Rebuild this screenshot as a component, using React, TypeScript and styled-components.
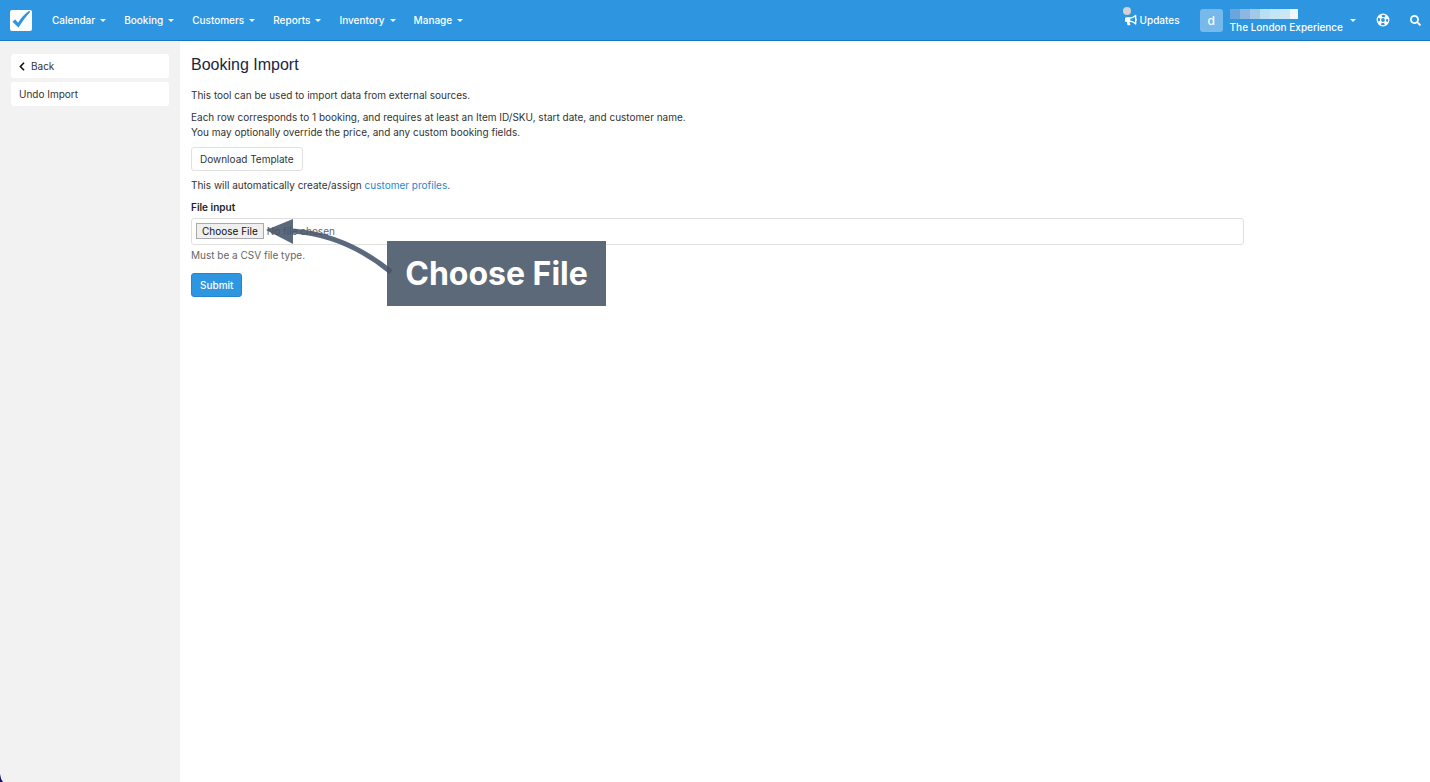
import React from "react";
import styled, { createGlobalStyle } from "styled-components";
import { FaBullhorn, FaSearch } from "react-icons/fa";

const GlobalStyle = createGlobalStyle`
  *, *::before, *::after { box-sizing: border-box; }
  body {
    margin: 0;
    background: #fff;
    color: #333;
    font-family: Inter, "Liberation Sans", Arial, sans-serif;
    font-size: 10px;
    line-height: 15px;
  }
  button, input { font-family: inherit; font-size: inherit; line-height: inherit; }
`;

const Page = styled.div`
  display: flex;
  flex-direction: column;
  min-height: 100vh;
`;

const TopBar = styled.header`
  display: flex;
  align-items: center;
  height: 41px;
  padding: 0 9px;
  background: #2e95e0;
  border-bottom: 1px solid #1578c8;
  color: #fff;
`;

const Logo = styled.a`
  display: flex;
  margin-right: 20px;
`;

const Nav = styled.nav`
  display: flex;
  gap: 18px;
`;

const BarButton = styled.button<{ $gap?: number }>`
  position: relative;
  display: flex;
  align-items: center;
  gap: ${(p) => p.$gap ?? 5}px;
  padding: 0;
  border: 0;
  background: none;
  color: #fff;
  font-weight: 500;
  cursor: pointer;
`;

const Caret = styled.span`
  border: 3px solid transparent;
  border-top-color: #fff;
  border-bottom: 0;
`;

const Tools = styled.div`
  display: flex;
  align-items: center;
  margin-left: auto;
  gap: 20px;
`;

const Dot = styled.span`
  position: absolute;
  top: -6px;
  left: -2px;
  width: 8px;
  height: 8px;
  border-radius: 50%;
  background: #d3d1d1;
`;

const Avatar = styled.span`
  display: flex;
  align-items: center;
  justify-content: center;
  width: 23px;
  height: 23px;
  border-radius: 3px;
  background: #78b9eb;
  font-size: 12px;
`;

const Account = styled.span`
  display: flex;
  flex-direction: column;
  align-items: flex-start;
  gap: 1px;
  padding-top: 3px;
`;

const MaskedName = styled.span`
  display: flex;
  height: 10px;
`;

const MaskBlock = styled.span<{ $color: string }>`
  width: 10px;
  background: ${(p) => p.$color};
  &:last-child { width: 8px; }
`;

const Body = styled.div`
  display: flex;
  flex: 1;
`;

const Sidebar = styled.aside`
  position: relative;
  display: flex;
  flex-direction: column;
  flex: 0 0 180px;
  gap: 4px;
  padding: 13px 11px;
  background: #f2f2f2;
`;

const SideLink = styled.a`
  display: flex;
  align-items: center;
  gap: 6px;
  height: 24px;
  padding: 0 8px;
  border-radius: 3px;
  background: #fff;
  color: #333;
  text-decoration: none;
`;

const ScreenCorner = styled.svg`
  position: absolute;
  left: 0;
  bottom: 0;
`;

const Main = styled.main`
  display: grid;
  grid-template-columns: 6fr 1fr;
  flex: 1;
  align-content: start;
  padding: 14px 11px;
`;

const Content = styled.div`
  display: flex;
  flex-direction: column;
  align-items: flex-start;
`;

const Title = styled.h1`
  margin: 0 0 13px;
  color: #1b2540;
  font-family: "Liberation Sans", Arial, sans-serif;
  font-size: 16px;
  font-weight: 400;
  line-height: 20px;
`;

const Text = styled.p`
  margin: 0 0 7px;
`;

const Link = styled.a`
  color: #2488d1;
  text-decoration: none;
`;

const Button = styled.button<{ $primary?: boolean }>`
  height: 24px;
  margin-bottom: 7px;
  padding: 0 8px;
  border: 1px solid ${(p) => (p.$primary ? "#2585cf" : "#e0e0e0")};
  border-radius: 3px;
  background: ${(p) => (p.$primary ? "#2e95e0" : "#fff")};
  color: ${(p) => (p.$primary ? "#fff" : "#333")};
  font-weight: ${(p) => (p.$primary ? 500 : 400)};
  cursor: pointer;
`;

const Label = styled.label`
  margin-bottom: 3px;
  color: #222;
  font-weight: 600;
`;

const Field = styled.div`
  position: relative;
  width: 100%;
  margin-bottom: 3px;
`;

const FileInput = styled.input`
  display: block;
  width: 100%;
  height: 27px;
  padding: 4px;
  border: 1px solid #e0e0e0;
  border-radius: 3px;
  background: #fff;
  color: #666;

  &::file-selector-button {
    height: 16px;
    margin: 0 3px 0 0;
    padding: 0 5px;
    border: 1px solid #aaa;
    border-radius: 0;
    background: #efefef;
    color: #111;
    font: inherit;
    line-height: 14px;
  }
`;

const Hint = styled.p`
  margin: 0 0 10px;
  color: #666;
`;

const Arrow = styled.svg`
  position: absolute;
  top: 0;
  left: 74px;
  pointer-events: none;
`;

const Callout = styled.div`
  position: absolute;
  top: 23px;
  left: 196px;
  display: flex;
  align-items: center;
  justify-content: center;
  width: 219px;
  height: 65px;
  background: #5c6978;
  color: #fff;
  font-size: 32px;
  font-weight: 700;
  line-height: 40px;
  white-space: nowrap;
`;

const menus = ["Calendar", "Booking", "Customers", "Reports", "Inventory", "Manage"];
const maskColors = ["#6aa5dc", "#8ab8e2", "#a3c8e8", "#b9dff3", "#c2e6f6", "#cbe6f5", "#eef7fb"];

const LogoIcon = () => (
  <svg width="23" height="23" viewBox="0 0 23 23" aria-hidden="true">
    <rect x="1" y="1" width="22" height="21" rx="2" fill="#fff" />
    <path d="M3.4 12.8 6.3 10.6 9.1 13.8Q13 6.8 20.2 1.8L21.2 2.8Q15 9.6 9.5 18.6Z" fill="#2e95e0" />
  </svg>
);

const LifeRing = () => (
  <svg width="14" height="14" viewBox="0 0 14 14" fill="none" stroke="#fff" aria-hidden="true">
    <circle cx="7" cy="7" r="5.8" strokeWidth="1.2" />
    <circle cx="7" cy="7" r="2.5" strokeWidth="1.2" />
    <circle cx="7" cy="7" r="4.2" strokeWidth="3" strokeDasharray="3.3 3.3" strokeDashoffset="-1.65" />
  </svg>
);

export default function App() {
  return (
    <Page>
      <GlobalStyle />
      <TopBar>
        <Logo href="#" aria-label="Home"><LogoIcon /></Logo>
        <Nav>
          {menus.map((name) => (
            <BarButton key={name}>{name}<Caret /></BarButton>
          ))}
        </Nav>
        <Tools>
          <BarButton $gap={3}>
            <Dot />
            <FaBullhorn size={12} />
            Updates
          </BarButton>
          <BarButton $gap={7}>
            <Avatar>d</Avatar>
            <Account>
              <MaskedName>
                {maskColors.map((color) => <MaskBlock key={color} $color={color} />)}
              </MaskedName>
              The London Experience
            </Account>
            <Caret />
          </BarButton>
          <BarButton aria-label="Help"><LifeRing /></BarButton>
          <BarButton aria-label="Search"><FaSearch size={11} /></BarButton>
        </Tools>
      </TopBar>
      <Body>
        <Sidebar>
          <SideLink href="#">
            <svg width="6" height="9" viewBox="0 0 6 9" fill="none" stroke="#111" strokeWidth="1.6" aria-hidden="true">
              <path d="M5 .8 1.4 4.5 5 8.2" />
            </svg>
            Back
          </SideLink>
          <SideLink href="#">Undo Import</SideLink>
          <ScreenCorner width="3" height="8" viewBox="0 0 3 8" aria-hidden="true">
            <path d="M0 0Q.5 5 3 8H0Z" fill="#15106b" />
          </ScreenCorner>
        </Sidebar>
        <Main>
          <Content>
            <Title>Booking Import</Title>
            <Text>This tool can be used to import data from external sources.</Text>
            <Text>
              Each row corresponds to 1 booking, and requires at least an Item ID/SKU, start date, and customer name.
              <br />
              You may optionally override the price, and any custom booking fields.
            </Text>
            <Button>Download Template</Button>
            <Text>This will automatically create/assign <Link href="#">customer profiles</Link>.</Text>
            <Label htmlFor="csv">File input</Label>
            <Field>
              <FileInput id="csv" type="file" />
              <Callout>Choose File</Callout>
              <Arrow width="130" height="60" viewBox="0 0 130 60" aria-hidden="true">
                <path d="M28 13C66 16 98 31 126 54" fill="none" stroke="#44546a" strokeOpacity=".88" strokeWidth="5" />
                <path d="M1 12 28 1V26Z" fill="#44546a" fillOpacity=".88" />
              </Arrow>
            </Field>
            <Hint>Must be a CSV file type.</Hint>
            <Button $primary>Submit</Button>
          </Content>
        </Main>
      </Body>
    </Page>
  );
}
